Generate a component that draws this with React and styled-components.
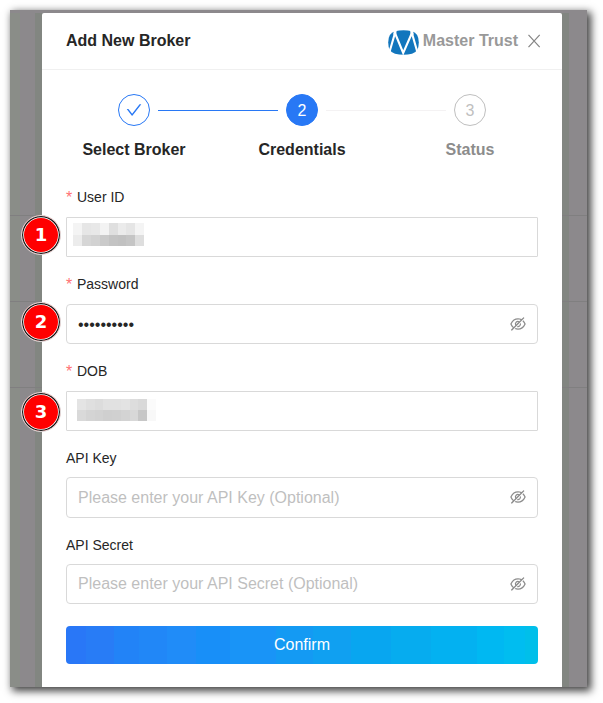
import React from 'react';
import styled, { createGlobalStyle } from 'styled-components';
import { AiOutlineCheck, AiOutlineEyeInvisible } from 'react-icons/ai';

const GlobalStyle = createGlobalStyle`
  * { box-sizing: border-box; }
  body {
    margin: 0;
    background: #fff;
    font-family: "Liberation Sans", Arial, sans-serif;
    color: #262626;
    overflow: hidden;
  }
`;

const Page = styled.div`
  height: 703px;
  padding: 10px 16px 16px 10px;
`;

const Backdrop = styled.main`
  position: relative;
  width: 577px;
  height: 677px;
  padding: 3px 25px 0 32px;
  box-shadow: 3px 3px 8px 1px rgba(0, 0, 0, 0.75);
  background:
    linear-gradient(#807f80, #807f80) 0 205px / 100% 1px no-repeat,
    linear-gradient(#807f80, #807f80) 0 291px / 100% 1px no-repeat,
    linear-gradient(#807f80, #807f80) 0 377px / 100% 1px no-repeat,
    linear-gradient(90deg, #8a8d88 0 10px, #8c898c 10px 25px, #828681 25px 559px, #8c898c 559px);
  &::before {
    content: "";
    position: absolute;
    inset: 0 0 auto;
    height: 3px;
    background: #8c898c;
  }
`;

const Dialog = styled.section`
  width: 520px;
  height: 674px;
  background: #fff;
  border-radius: 2px 2px 0 0;
`;

const Header = styled.header`
  display: flex;
  align-items: center;
  height: 57px;
  padding: 0 20px 0 24px;
  border-bottom: 1px solid #f0f0f0;
`;

const Title = styled.h1`
  margin: 0;
  flex: 1;
  font-size: 16px;
  line-height: 24px;
`;

const Brand = styled.div`
  display: flex;
  align-items: center;
  gap: 4px;
  color: #999;
  font-size: 16px;
  font-weight: 700;
  line-height: 24px;
`;

const BrandLogo = styled.svg`
  width: 31px;
  height: 25px;
  margin-top: 2px;
`;

const CloseButton = styled.button`
  display: flex;
  margin-left: 8px;
  padding: 0;
  border: 0;
  background: none;
  color: #858585;
`;

const CloseGlyph = styled.svg`
  width: 16px;
  height: 16px;
  margin-top: -1px;
  fill: none;
  stroke: currentColor;
  stroke-width: 1.2;
`;

const Body = styled.div`
  padding: 24px 24px 0;
`;

const Steps = styled.ol`
  display: flex;
  justify-content: space-between;
  height: 68px;
  margin: 0;
  padding: 0;
  list-style: none;
`;

const Step = styled.li`
  display: flex;
  flex-direction: column;
  align-items: center;
  gap: 12px;
  width: 136px;
  flex: none;
`;

const StepDot = styled.span`
  display: flex;
  align-items: center;
  justify-content: center;
  width: 32px;
  height: 32px;
  padding-top: ${({ $state }) => ($state === 'done' ? 0 : 2)}px;
  border: 1px solid ${({ $state }) => ($state === 'wait' ? '#bfbfbf' : '#2878f5')};
  border-radius: 50%;
  background: ${({ $state }) => ($state === 'active' ? '#2878f5' : '#fff')};
  color: ${({ $state }) => ({ done: '#2878f5', active: '#fff', wait: '#bfbfbf' })[$state]};
  font-size: 16px;
  & > svg { width: 18px; height: 18px; }
`;

const StepName = styled.span`
  color: ${({ $state }) => ($state === 'wait' ? '#8c8c8c' : '#262626')};
  font-size: 16px;
  font-weight: 700;
  line-height: 24px;
`;

const StepLine = styled.li`
  flex: none;
  width: 120px;
  height: 1px;
  margin: 16px -44px 0;
  background: ${({ $done }) => ($done ? '#2878f5' : '#f4f2f3')};
`;

const Form = styled.form`
  margin-top: 24px;
`;

const Field = styled.div`
  height: ${({ $height }) => $height}px;
`;

const Label = styled.label`
  display: flex;
  gap: 4px;
  height: 22px;
  margin-bottom: ${({ $gap }) => $gap}px;
  font-size: 14px;
  line-height: 22px;
`;

const Required = styled.span`
  width: 7px;
  color: #ff7073;
  padding-top: 1px;
  font-size: 16px;
`;

const InputBox = styled.div`
  display: flex;
  align-items: center;
  height: ${({ $height }) => $height}px;
  padding: 0 11px;
  border: 1px solid #d9d9d9;
  border-radius: ${({ $square }) => ($square ? 1 : 4)}px;
  color: #8c8c8c;
  & > svg { width: 18px; height: 18px; margin: -1px -1px 0 0; }
`;

const Input = styled.input`
  flex: 1;
  min-width: 0;
  height: 24px;
  padding: ${({ type }) => (type === 'password' ? '1px 0 0' : '0')};
  border: 0;
  outline: 0;
  background: transparent;
  color: #262626;
  font: 16px/24px "Liberation Sans", Arial, sans-serif;
  &::placeholder { color: #bfbfbf; opacity: 1; }
`;

const Mosaic = styled.div`
  display: grid;
  grid-template-columns: ${({ $columns }) => $columns};
  grid-template-rows: ${({ $rows }) => $rows};
  margin: ${({ $margin }) => $margin};
`;

const Tile = styled.span`
  background: ${({ $tone }) => $tone};
`;

const Confirm = styled.button`
  display: block;
  width: 100%;
  height: 38px;
  padding: 0;
  border: 0;
  border-radius: 4px;
  background: linear-gradient(90deg,
    #2977f7 0 20px, #287cf6 20px 48px, #2283f7 48px 73px, #2187f7 73px 101px,
    #208cf8 101px 130px, #188ff8 130px 164px, #1994f7 164px 210px, #149af3 210px 247px,
    #10a0f1 247px 285px, #08a6f0 285px 325px, #06acef 325px 365px, #03b1f1 365px 411px,
    #00b8f2 411px 438px, #00bdf0 438px 459px, #00bfea 459px);
  color: #fff;
  font: 16px/38px "Liberation Sans", Arial, sans-serif;
`;

const Marker = styled.span`
  position: absolute;
  left: 11px;
  top: ${({ $top }) => $top}px;
  display: flex;
  align-items: center;
  justify-content: center;
  width: 40px;
  height: 40px;
  border: 1px solid #ddd;
  border-radius: 50%;
  background: #f00;
  box-shadow: inset 0 0 0 1.2px #111, inset 0 0 0 2px #fff;
  color: #fff;
  font: 700 18px/20px "DejaVu Sans", sans-serif;
  padding: 0 0 1px;
`;

const userTones = [
  '#f4f4f4', '#e6e6e6', '#e8e8e8', '#f3f3f3', '#dfdfdf', '#ebebeb', '#e5e5e5', '#f4f4f4',
  '#ececec', '#d6d6d6', '#d2d2d2', '#cacaca', '#c3c3c3', '#c1c1c1', '#c5c5c5', '#dedede',
];
const dobTones = [
  '#e4e4e4', '#dfdfdf', '#dcdcdc', '#e1e1e1', '#e1e1e1', '#e3e3e3', '#dddddd', '#d9d9d9', '#fbfbfb',
  '#d9d9d9', '#d4d4d4', '#d2d2d2', '#cfcfcf', '#d0d0d0', '#d3d3d3', '#d8d8d8', '#c7c7c7', '#f8f8f8',
];

function MasterTrustLogo() {
  return (
    <BrandLogo viewBox="0 0 31 25" aria-hidden="true">
      <path fill="#1276bd" d="M7 1.2Q15.5-.6 24 1.2Q30.8 3 30.8 12.5Q30.8 22 24 23.8Q15.5 25.6 7 23.8Q.2 22 .2 12.5Q.2 3 7 1.2Z" />
      <path fill="none" stroke="#fff" strokeWidth="2.1" strokeMiterlimit="8" d="M1.2 23L7 3L15.2 23L23.9 3L29.6 23" />
      <path fill="#fff" d="M5.2 4.5L6 0H8.8L8 5ZM22.8 5L22 0H24.8L25.8 4.5Z" />
    </BrandLogo>
  );
}

function FormField({ label, required, height = 87, gap = 9, boxHeight = 40, square, children }) {
  return (
    <Field $height={height}>
      <Label $gap={gap}>{required && <Required>*</Required>}{label}</Label>
      <InputBox $height={boxHeight} $square={square}>{children}</InputBox>
    </Field>
  );
}

export default function App() {
  return (
    <Page>
      <GlobalStyle />
      <Backdrop>
        <Dialog>
          <Header>
            <Title>Add New Broker</Title>
            <Brand><MasterTrustLogo />Master Trust</Brand>
            <CloseButton aria-label="Close">
              <CloseGlyph viewBox="0 0 16 16"><path d="M2.5 1.8L13.7 14.2M13.7 1.8L2.5 14.2" /></CloseGlyph>
            </CloseButton>
          </Header>
          <Body>
            <Steps>
              <Step><StepDot $state="done"><AiOutlineCheck /></StepDot><StepName>Select Broker</StepName></Step>
              <StepLine $done />
              <Step><StepDot $state="active">2</StepDot><StepName>Credentials</StepName></Step>
              <StepLine />
              <Step><StepDot $state="wait">3</StepDot><StepName $state="wait">Status</StepName></Step>
            </Steps>
            <Form>
              <FormField label="User ID" required square>
                <Mosaic $columns="9px 9px 9px 9px 9px 8px 9px 9px" $rows="12px 11px" $margin="-5px 0 0 -5px">
                  {userTones.map((tone, i) => <Tile key={i} $tone={tone} />)}
                </Mosaic>
              </FormField>
              <FormField label="Password" required>
                <Input type="password" defaultValue="brokerpass" />
                <AiOutlineEyeInvisible />
              </FormField>
              <FormField label="DOB" required square>
                <Mosaic $columns="9px 9px 8px 9px 9px 9px 8px 9px 9px" $rows="11px 11px" $margin="-2px 0 0 -1px">
                  {dobTones.map((tone, i) => <Tile key={i} $tone={tone} />)}
                </Mosaic>
              </FormField>
              <FormField label="API Key" gap={8} boxHeight={41}>
                <Input placeholder="Please enter your API Key (Optional)" />
                <AiOutlineEyeInvisible />
              </FormField>
              <FormField label="API Secret" gap={8} height={92}>
                <Input placeholder="Please enter your API Secret (Optional)" />
                <AiOutlineEyeInvisible />
              </FormField>
              <Confirm type="button">Confirm</Confirm>
            </Form>
          </Body>
        </Dialog>
        <Marker $top={205}>1</Marker>
        <Marker $top={292}>2</Marker>
        <Marker $top={382}>3</Marker>
      </Backdrop>
    </Page>
  );
}
